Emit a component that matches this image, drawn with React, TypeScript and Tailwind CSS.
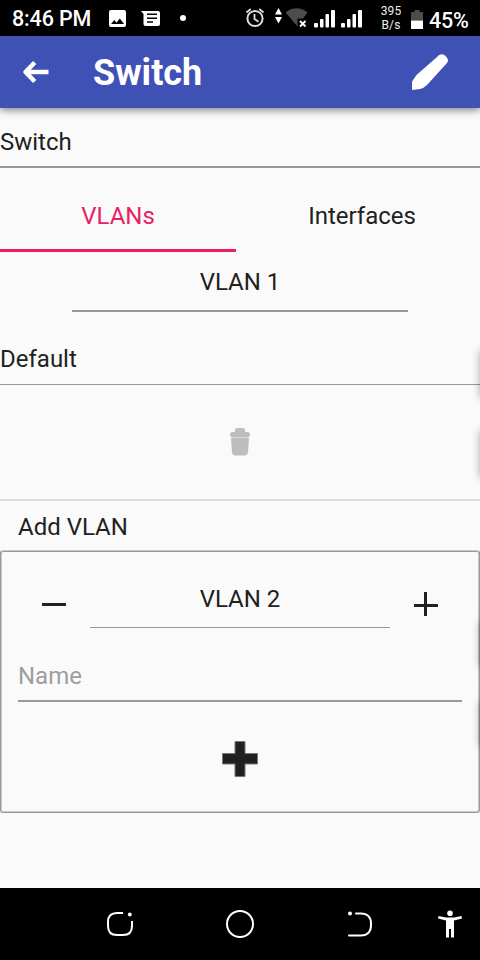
import type { ReactNode } from "react";

function StatusBar() {
  return (
    <div className="h-9 shrink-0 bg-black text-white flex items-center relative">
      <span className="ml-3 w-[95px] text-[21.500px] leading-9 font-medium tracking-[-0.15px] pt-[2px] whitespace-nowrap">
        8:46 PM
      </span>
      <svg width="373" height="36" viewBox="107 0 373 36" fill="none">
        <path fill="#fff" fillRule="evenodd" d="M111 10h13a2 2 0 0 1 2 2v13a2 2 0 0 1-2 2h-13a2 2 0 0 1-2-2V12a2 2 0 0 1 2-2Zm0 14h13l-4.200-5.500-3.300 4.200-2.200-2.700Z" />
        <path fill="#fff" fillRule="evenodd" d="M141 11h17a2 2 0 0 1 2 2v11a2 2 0 0 1-2 2h-12.500a2 2 0 0 1-2-2V14Zm6 2.600v1.500h10v-1.500Zm0 3.900V19h10v-1.500Zm0 3.800v1.500h6v-1.500Z" />
        <circle cx="183" cy="18" r="3" fill="#fff" />
        <circle cx="255" cy="18.500" r="7.600" stroke="#ddd" strokeWidth="2" />
        <path d="M254.500 14v5l4 2.800M246.500 12.500l4.200-3.500M263.500 12.500 259.300 9" stroke="#ddd" strokeWidth="1.800" />
        <path d="m278.500 8 3.500 6.500h-7ZM278.500 23.500l3.500-6.500h-7Z" fill="#fff" />
        <path d="M285.500 12.500c6-5.700 16-5.700 22 0l-4.500 6h-5.500v8Z" fill="#4c4c4c" />
        <path d="m300 21 5.500 5.500m0-5.500-5.500 5.500" stroke="#fff" strokeWidth="1.900" />
        <g fill="#fff">
          <rect x="314" y="23" width="4" height="4.500" rx="1" />
          <rect x="320" y="19" width="3.500" height="8.500" rx="1" />
          <rect x="325.500" y="14" width="3.500" height="13.500" rx="1" />
          <rect x="331" y="10" width="4" height="17.500" rx="1" />
          <rect x="341" y="23" width="4" height="4.500" rx="1" />
          <rect x="347" y="19" width="3.500" height="8.500" rx="1" />
          <rect x="352.500" y="14" width="3.500" height="13.500" rx="1" />
          <rect x="358" y="10" width="4" height="17.500" rx="1" />
        </g>
        <path d="M411 12h3.500v-2h5v2h3.500v8.500h-12Z" fill="#4c4c4c" />
        <path d="M411 20.500h12V29h-12Z" fill="#fff" />
      </svg>
      <div className="absolute left-[377px] top-[5px] w-7 text-center text-[12px] leading-[13.500px] tracking-[0.1px] text-[#eee]">
        395
        <br />
        B/s
      </div>
      <span className="absolute left-[429px] top-[3px] text-[21.500px] leading-9 font-medium tracking-[-0.2px]">45%</span>
    </div>
  );
}

function AppBar() {
  return (
    <header className="h-[72px] shrink-0 bg-[#3f51b5] text-white flex items-center shadow-[0_2px_8px_rgba(0,0,0,0.5)] relative">
      <svg className="ml-[22px]" width="28" height="24" viewBox="0 0 28 24" fill="none" stroke="#fff" strokeWidth="4.600" strokeLinejoin="round">
        <path d="M26.500 12H4M12.700 2.500 3.500 12l9.200 9.500" />
      </svg>
      <h1 className="ml-[43px] pt-[2px] text-[36px] leading-[42px] font-bold grow">Switch</h1>
      <svg className="mr-8" width="36" height="36" viewBox="0 0 36 36" fill="#fff">
        <path d="M0 36V27.500L4.500 21 27 1.200Q30-1 33 1.500L34.800 3.500Q37 6.500 35 9L15 31Q12 34 8 35Z" />
      </svg>
    </header>
  );
}

function Label({ children, className = "" }: { children: ReactNode; className?: string }) {
  return <div className={`text-[24px] leading-7 whitespace-nowrap ${className}`}>{children}</div>;
}

function AddVlan() {
  return (
    <section className="mt-[9px] h-[263px] border border-[#999] border-t-[#c8c8c8] shadow-[inset_0_1px_#999,inset_1px_0_#c8c8c8,inset_-1px_-1px_#c8c8c8] rounded-[3px] px-[17px] pt-px flex flex-col">
      <div className="flex h-[76px] justify-between">
        <button className="w-[72px] h-[76px] flex items-center justify-center pt-[29px]" aria-label="Decrease">
          <span className="w-6 h-[3px] bg-[#212121]" />
        </button>
        <div className="w-[300px] h-[76px] border-b border-[#999] pt-[33px] text-center">
          <Label>VLAN 2</Label>
        </div>
        <button className="w-[72px] h-[76px] flex items-center justify-center pt-[28px]" aria-label="Increase">
          <svg width="24" height="24" viewBox="0 0 24 24" fill="#212121">
            <path d="M0 11.500h24v3H0ZM10 0h3v24h-3Z" shapeRendering="crispEdges" />
          </svg>
        </button>
      </div>
      <div className="h-[74px] border-b-2 border-[#999] pt-[34px]">
        <Label className="text-[#9e9e9e]">Name</Label>
      </div>
      <svg className="mt-[39px] self-center" width="36" height="36" viewBox="0 0 36 36">
        <path d="M13 .5h10v12h12.500v10.500H23v12.500H13V23H.5V12.500H13Z" fill="#212121" stroke="#777" strokeWidth="1" strokeLinejoin="round" />
      </svg>
    </section>
  );
}

function EdgeShadows() {
  return (
    <div className="absolute inset-y-0 right-0 w-4 overflow-hidden pointer-events-none">
      <i className="absolute left-4 top-[348px] size-12 rounded shadow-[0_2px_8px_rgba(0,0,0,0.34)]" />
      <i className="absolute left-4 top-[428px] size-12 rounded shadow-[0_2px_8px_rgba(0,0,0,0.34)]" />
      <i className="absolute left-4 top-[618px] size-12 rounded shadow-[0_2px_8px_rgba(0,0,0,0.34)]" />
      <i className="absolute left-4 top-[698px] size-12 rounded shadow-[0_2px_8px_rgba(0,0,0,0.34)]" />
    </div>
  );
}

function NavBar() {
  return (
    <nav className="h-[72px] shrink-0 bg-black relative">
      <svg width="480" height="72" viewBox="0 0 480 72" fill="none" stroke="#fff" strokeWidth="2">
        <path d="M123 25h-6c-6 0-9 3-9 9v4c0 6 3 9 9 9h6c6 0 9-3 9-9v-5" strokeLinecap="butt" />
        <circle cx="129.800" cy="26.500" r="1.900" fill="#fff" stroke="none" />
        <circle cx="240" cy="36" r="13" />
        <path d="M356 25.500h5c6.500 0 10 4 10 10v2c0 6-3.500 10-10 10h-12" strokeLinecap="round" />
        <circle cx="350" cy="25.500" r="2" fill="#fff" stroke="none" />
        <g fill="#fff" stroke="none">
          <circle cx="450" cy="25.300" r="2.800" />
          <path d="m438.500 28 7.500 1.500h8l7.500-1.500.5 2.500-8 2V49.500h-3V41h-2v8.500h-3V32.500l-8-2Z" />
        </g>
      </svg>
    </nav>
  );
}

export default function App() {
  return (
    <div className="w-[480px] h-[960px] overflow-hidden relative bg-[#fafafa] text-[#212121] font-[Roboto,sans-serif] flex flex-col">
      <StatusBar />
      <AppBar />
      <main className="grow min-h-0 flex flex-col">
        <div className="h-[60px] shrink-0 border-b-2 border-[#999] pt-5">
          <Label>Switch</Label>
        </div>
        <div className="flex h-[84px] shrink-0 gap-2 text-center">
          <div className="w-[236px] pt-[34px] border-b-[3px] border-[#e91e63] text-[#e91e63]">
            <Label>VLANs</Label>
          </div>
          <div className="w-[236px] pt-[34px]">
            <Label>Interfaces</Label>
          </div>
        </div>
        <div className="h-[60px] shrink-0 mx-[72px] border-b-2 border-[#999] pt-4 text-center">
          <Label>VLAN 1</Label>
        </div>
        <div className="h-[73px] shrink-0 border-b border-[#999] pt-[33px]">
          <Label>Default</Label>
        </div>
        <div className="h-[116px] shrink-0 border-b-2 border-[#dedede] flex justify-center pt-[43px]">
          <svg width="20" height="28" viewBox="0 0 20 28" fill="#bdbdbd">
            <path d="M5 2q0-2 2-2h6q2 0 2 2v2h3q2 0 2 2.500T18 9H2Q0 9 0 6.500T2 4h3ZM1 10h18L18 24q-.3 3.500-3.500 3.500h-9Q2.300 27.500 2 24Z" />
            <path d="M1.500 9h17v1h-17Z" fill="#d8d8d8" />
          </svg>
        </div>
        <Label className="mt-3 ml-[18px]">Add VLAN</Label>
        <AddVlan />
      </main>
      <EdgeShadows />
      <NavBar />
    </div>
  );
}
